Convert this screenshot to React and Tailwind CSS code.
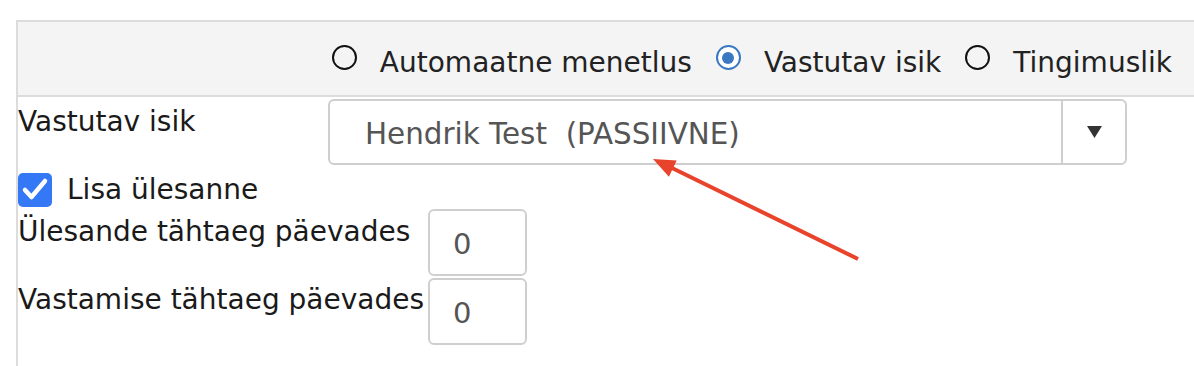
import React from "react";

function Radio({ checked, label }) {
    return (
        <div className="flex items-start gap-[23px]">
            {checked ? (
                <span className="w-[25px] h-[25px] rounded-full border-[2.5px] border-[#3a78c3] bg-white flex items-center justify-center">
                    <span className="w-[12px] h-[12px] rounded-full bg-[#3a78c3]" />
                </span>
            ) : (
                <span className="w-[25px] h-[25px] rounded-full border-[2.5px] border-[#111]" />
            )}
            <span className="mt-[1px] leading-[34px] text-[#222]">{label}</span>
        </div>
    );
}

function NumberField({ label, value, labelTop }) {
    return (
        <div className="flex items-start">
            <div className={`w-[410px] leading-[34px] text-[#1a1a1a] ${labelTop}`}>{label}</div>
            <div className="w-[99px] h-[67px] border-2 border-[#cfcfcf] rounded-[6px] flex items-center pl-[23px] pt-[3px] text-[29px] text-[#555] leading-[34px]">
                {value}
            </div>
        </div>
    );
}

export default function App() {
    return (
        <div className="relative w-[1194px] h-[366px] overflow-hidden bg-white font-['DejaVu_Sans',sans-serif] text-[28px]">
            <div className="ml-[16px] mt-[20px] h-[346px] border-l-2 border-t-2 border-[#dcdcdc]">
                <div className="h-[75px] bg-[#f4f4f4] border-b-2 border-[#dcdcdc] flex items-start justify-end pt-[23px] pr-[22px] gap-[24px]">
                    <Radio label="Automaatne menetlus" />
                    <Radio checked label="Vastutav isik" />
                    <Radio label="Tingimuslik" />
                </div>

                <div className="flex items-start pt-[2px]">
                    <div className="w-[310px] pt-[6px] leading-[34px] text-[#1a1a1a]">Vastutav isik</div>
                    <div className="w-[799px] h-[66px] border-2 border-[#cfcfcf] rounded-[6px] flex">
                        <div className="flex-1 flex items-center pl-[35px] pt-[3px] text-[29.4px] leading-[34px] text-[#555] whitespace-pre">
                            Hendrik Test  (PASSIIVNE)
                        </div>
                        <div className="w-[64px] border-l-2 border-[#cfcfcf] flex items-center justify-center">
                            <svg width="15" height="12" viewBox="0 0 15 12">
                                <polygon points="0,0 15,0 7.5,12" fill="#333" />
                            </svg>
                        </div>
                    </div>
                </div>

                <div className="flex items-center gap-[15px] mt-[8px]">
                    <span className="w-[34px] h-[34px] rounded-[5px] bg-[#3478f6] flex items-center justify-center">
                        <svg width="34" height="34" viewBox="0 0 34 34">
                            <path d="M7 17 L13.5 24 L27 8" fill="none" stroke="#fff" strokeWidth="4.5" strokeLinecap="round" strokeLinejoin="round" />
                        </svg>
                    </span>
                    <span className="leading-[34px] text-[#1a1a1a]">Lisa ülesanne</span>
                </div>

                <div className="mt-[2px] flex flex-col gap-[2px]">
                    <NumberField label="Ülesande tähtaeg päevades" value="0" labelTop="pt-[6px]" />
                    <NumberField label="Vastamise tähtaeg päevades" value="0" labelTop="pt-[5px]" />
                </div>
            </div>

            <svg className="absolute left-0 top-0 pointer-events-none" width="1194" height="366" viewBox="0 0 1194 366">
                <line x1="858" y1="259" x2="670" y2="167" stroke="#e8432b" strokeWidth="4" />
                <polygon points="653,159 676.7,160.6 668.9,176.8" fill="#e8432b" />
            </svg>
        </div>
    );
}
